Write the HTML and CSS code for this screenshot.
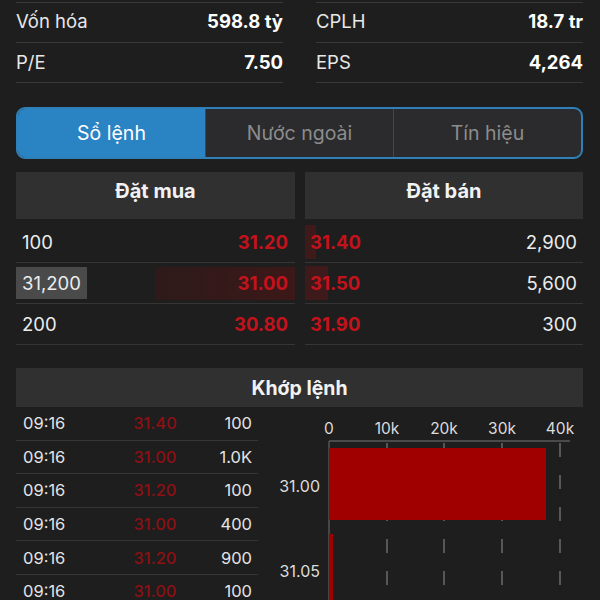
FILE: index.html
```html
<!DOCTYPE html>
<html lang="vi">
<head>
    <meta charset="UTF-8">
    <meta name="viewport" content="width=device-width, initial-scale=1.0">
    <title>Sổ lệnh</title>
    <link rel="stylesheet" href="styles.css">
</head>
<body>
    <!-- Chi so co ban -->
    <div class="stats">
        <div class="stat-col">
            <div class="stat-row"><span>Vốn hóa</span><b>598.8 tỷ</b></div>
            <div class="stat-row"><span>P/E</span><b>7.50</b></div>
        </div>
        <div class="stat-col">
            <div class="stat-row"><span>CPLH</span><b>18.7 tr</b></div>
            <div class="stat-row"><span>EPS</span><b>4,264</b></div>
        </div>
    </div>

    <div class="tabs">
        <div class="tab tab-active">Sổ lệnh</div>
        <div class="tab">Nước ngoài</div>
        <div class="tab">Tín hiệu</div>
    </div>

    <!-- So lenh -->
    <div class="book">
        <div class="book-side">
            <div class="book-head">Đặt mua</div>
            <div class="book-row">
                <span class="vol">100</span>
                <span class="price">31.20</span>
            </div>
            <div class="book-row">
                <span class="vol vol-mark">31,200</span>
                <span class="bid-bar" style="width: 140px;"></span>
                <span class="price">31.00</span>
            </div>
            <div class="book-row">
                <span class="vol">200</span>
                <span class="price">30.80</span>
            </div>
        </div>
        <div class="book-side">
            <div class="book-head">Đặt bán</div>
            <div class="book-row">
                <span class="ask-bar" style="width: 11px;"></span>
                <span class="price">31.40</span>
                <span class="vol">2,900</span>
            </div>
            <div class="book-row">
                <span class="ask-bar" style="width: 23px;"></span>
                <span class="price">31.50</span>
                <span class="vol">5,600</span>
            </div>
            <div class="book-row">
                <span class="price">31.90</span>
                <span class="vol">300</span>
            </div>
        </div>
    </div>

    <!-- Khop lenh -->
    <div class="match-head">Khớp lệnh</div>
    <div class="match">
        <div class="trades">
            <div class="trade"><span class="t-time">09:16</span><span class="t-price">31.40</span><span class="t-vol">100</span></div>
            <div class="trade"><span class="t-time">09:16</span><span class="t-price">31.00</span><span class="t-vol">1.0K</span></div>
            <div class="trade"><span class="t-time">09:16</span><span class="t-price">31.20</span><span class="t-vol">100</span></div>
            <div class="trade"><span class="t-time">09:16</span><span class="t-price">31.00</span><span class="t-vol">400</span></div>
            <div class="trade"><span class="t-time">09:16</span><span class="t-price">31.20</span><span class="t-vol">900</span></div>
            <div class="trade"><span class="t-time">09:16</span><span class="t-price">31.00</span><span class="t-vol">100</span></div>
        </div>
        <div class="chart">
            <svg width="325" height="194" viewBox="0 0 325 194">
                <g class="axis-text">
                    <text x="71" y="27">0</text>
                    <text x="129" y="27">10k</text>
                    <text x="186" y="27">20k</text>
                    <text x="244" y="27">30k</text>
                    <text x="302" y="27">40k</text>
                </g>
                <g stroke="#6b6b6b" stroke-width="1.5" stroke-dasharray="14 18" stroke-dashoffset="-2">
                    <line x1="129" y1="34" x2="129" y2="194"/>
                    <line x1="186" y1="34" x2="186" y2="194"/>
                    <line x1="244" y1="34" x2="244" y2="194"/>
                    <line x1="302" y1="34" x2="302" y2="194"/>
                </g>
                <line x1="71" y1="34" x2="312" y2="34" stroke="#5a5a5a" stroke-width="1.5"/>
                <line x1="71" y1="34" x2="71" y2="194" stroke="#555" stroke-width="1.5"/>
                <rect x="71" y="41" width="217" height="72" fill="#a00000"/>
                <rect x="71" y="127" width="4" height="67" fill="#a00000"/>
                <g class="label-text">
                    <text x="62" y="85">31.00</text>
                    <text x="62" y="170">31.05</text>
                </g>
            </svg>
        </div>
    </div>
</body>
</html>
```

FILE: styles.css
```css
body{
    margin: 0;
    background-color: #1e1e1e;
    color: #e8e8e8;
    font-family: Inter, "Liberation Sans", Arial, sans-serif;
    overflow: hidden;
}
.stats{
    display: grid;
    grid-template-columns: 1fr 1fr;
    gap: 33px;
    padding: 2px 17px 0 16px;
}
.stat-col{
    border-top: 1px solid #383838;
}
.stat-row{
    display: flex;
    justify-content: space-between;
    align-items: center;
    height: 38px;
    padding-bottom: 1px;
    border-bottom: 1px solid #383838;
    font-size: 18.5px;
}
.stat-row:first-child{
    height: 36px;
    padding-bottom: 3px;
}
.stat-row b{
    color: #fff;
    font-weight: 700;
}
.tabs{
    display: flex;
    margin: 24px 17px 0 16px;
    height: 48px;
    border: 2px solid #2f7fb8;
    border-radius: 9px;
    overflow: hidden;
    background-color: #2b2b2d;
}
.tab{
    flex: 1;
    display: flex;
    justify-content: center;
    align-items: center;
    font-size: 19.5px;
    color: #8c8c8c;
    border-left: 1px solid #3c4a56;
}
.tab:first-child{
    border-left: none;
}
.tab-active{
    background-color: #2a84c4;
    color: #fff;
}
.book{
    display: grid;
    grid-template-columns: 279px 278px;
    gap: 10px;
    margin: 13px 0 0 16px;
}
.book-head{
    height: 37px;
    padding-bottom: 10px;
    display: flex;
    justify-content: center;
    align-items: center;
    background-color: #303030;
    font-size: 20px;
    font-weight: 700;
    color: #f2f2f2;
    margin-bottom: 3px;
}
.book-row{
    position: relative;
    display: flex;
    justify-content: space-between;
    align-items: center;
    height: 40px;
    border-bottom: 1px solid #353535;
    font-size: 18.5px;
}
.book-side:first-child .book-row{
    padding: 0 7px 0 0;
}
.book-side:last-child .book-row{
    padding: 0 6px 0 5px;
}
.vol{
    color: #ececec;
    padding: 0 6px;
    position: relative;
}
.book-side:last-child .vol{
    padding: 0;
}
.vol-mark{
    background-color: #4a4a4a;
    line-height: 32px;
}
.price{
    color: #c4121c;
    font-weight: 700;
    position: relative;
}
.bid-bar{
    position: absolute;
    right: 0;
    top: 4px;
    bottom: 3px;
    background: linear-gradient(to right, #2e1a1a, #3c1818);
}
.ask-bar{
    position: absolute;
    left: 0;
    top: 3px;
    bottom: 3px;
    background-color: #3f1a1a;
}
.match-head{
    margin: 23px 17px 0 16px;
    height: 39px;
    display: flex;
    justify-content: center;
    align-items: center;
    background-color: #303030;
    font-size: 19.5px;
    font-weight: 700;
    color: #f2f2f2;
}
.match{
    display: flex;
    margin-left: 16px;
}
.trades{
    width: 242px;
}
.trade{
    display: grid;
    grid-template-columns: 90px 84px 1fr;
    align-items: center;
    height: 32.6px;
    border-bottom: 1px solid #363636;
    font-size: 16.5px;
    padding: 0 6px 0 7px;
}
.t-time{
    color: #e4e4e4;
}
.t-price{
    color: #8c1014;
    text-align: center;
    font-weight: 500;
}
.t-vol{
    color: #e4e4e4;
    text-align: right;
}
.chart svg{
    display: block;
}
.axis-text text{
    fill: #dcdcdc;
    font-size: 15.5px;
    text-anchor: middle;
}
.label-text text{
    fill: #dcdcdc;
    font-size: 16px;
    text-anchor: end;
}
```
